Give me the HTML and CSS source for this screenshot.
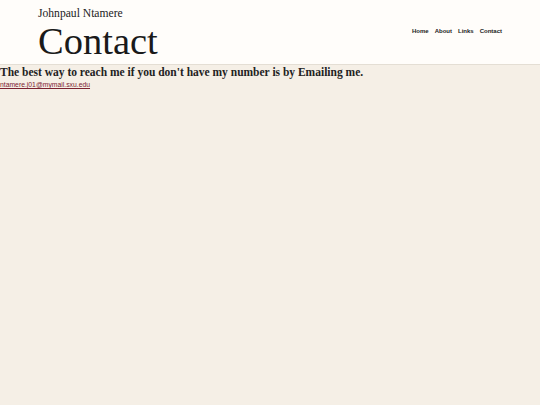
FILE: index.html
```html
<!DOCTYPE html>
<html>
<head>
<meta charset="utf-8">
<link rel="stylesheet" href="styles.css">
</head>
<body>
<header class="site-header">
  <div class="brand">
    <div class="author">Johnpaul Ntamere</div>
    <h1 class="title">Contact</h1>
  </div>
  <nav class="nav">
    <a href="#">Home</a>
    <a href="#">About</a>
    <a href="#">Links</a>
    <a href="#">Contact</a>
  </nav>
</header>
<main class="content">
  <h2 class="lead">The best way to reach me if you don't have my number is by Emailing me.</h2>
  <a class="email" href="#">ntamere.j01@mymail.sxu.edu</a>
</main>
</body>
</html>
```
FILE: styles.css
```css
html, body {
  margin: 0;
  padding: 0;
}
body {
  background: #f5efe6;
  font-family: "Liberation Serif", "Times New Roman", serif;
  color: #222;
  height: 405px;
}
.site-header {
  background: #fffdfa;
  border-bottom: 1px solid #e4ded4;
  height: 65px;
  display: flex;
  justify-content: space-between;
  align-items: flex-start;
  padding: 0 38px;
  box-sizing: border-box;
}
.brand {
  padding-top: 7px;
}
.author {
  font-size: 11.6px;
  line-height: 13px;
  color: #222;
}
.title {
  margin: 0;
  font-weight: normal;
  font-size: 38.5px;
  line-height: 43px;
  color: #1a1a1a;
}
.nav {
  display: flex;
  gap: 6px;
  padding-top: 28px;
}
.nav a {
  font-family: "Liberation Sans", Arial, sans-serif;
  font-weight: bold;
  font-size: 6px;
  color: #222;
  text-decoration: none;
}
.lead {
  margin: 0;
  font-size: 11.5px;
  line-height: 15px;
  font-weight: bold;
  color: #222;
}
.email {
  display: block;
  width: max-content;
  font-family: "Liberation Sans", Arial, sans-serif;
  font-size: 6.8px;
  line-height: 9px;
  color: #7b2230;
}
```
